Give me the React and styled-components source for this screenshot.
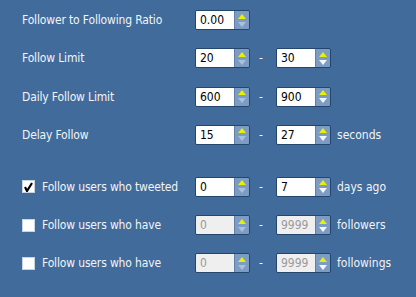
import React from "react";
import styled, { createGlobalStyle } from "styled-components";

const GlobalStyle = createGlobalStyle`
  html, body {
    margin: 0;
    padding: 0;
    background: #416b9b;
  }
  body {
    font-family: Tahoma, "DejaVu Sans Condensed", "Liberation Sans", sans-serif;
  }
`;

const Panel = styled.div`
  width: 416px;
  height: 297px;
  box-sizing: border-box;
  background: #416b9b;
  padding: 10px 0 0 22px;
  display: flex;
  flex-direction: column;
  gap: 32px;
  color: #f2f4f8;
  font-size: 12px;
`;

const Group = styled.div`
  display: flex;
  flex-direction: column;
  gap: 18.3px;
`;

const Row = styled.div`
  display: grid;
  grid-template-columns: 173px 55px 26px 55px auto;
  align-items: center;
  height: 20px;
`;

const Label = styled.div`
  display: flex;
  align-items: center;
  gap: 7px;
  white-space: nowrap;
  letter-spacing: -0.15px;
`;

const Box = styled.span`
  width: 13px;
  height: 13px;
  box-sizing: border-box;
  background: #fff;
  border: 1px solid #c8d4e2;
  display: flex;
  align-items: center;
  justify-content: center;
`;

const Dash = styled.div`
  text-align: center;
  padding-left: 2px;
  padding-right: 6px;
`;

const Suffix = styled.div`
  padding-left: 6px;
  white-space: nowrap;
`;

const Spin = styled.div`
  display: flex;
  width: 55px;
  height: 20px;
  box-sizing: border-box;
  border: 1px solid #24456c;
  border-radius: 2px;
  overflow: hidden;
`;

const Field = styled.div`
  flex: 1;
  background: ${(p) => (p.$disabled ? "#efefef" : "#fff")};
  color: ${(p) => (p.$disabled ? "#9a9a9a" : "#000")};
  padding-left: 4px;
  line-height: 18px;
`;

const Buttons = styled.div`
  width: 14px;
  background: #7c9cc4;
  border-left: 1px solid #5f80a8;
  display: flex;
  flex-direction: column;
  align-items: center;
  justify-content: center;
  gap: 3px;
`;

const Arrow = styled.span`
  width: 0;
  height: 0;
  border-left: 4px solid transparent;
  border-right: 4px solid transparent;
  ${(p) =>
    p.$up
      ? "border-bottom: 5px solid #e9f000;"
      : `border-top: 5px solid ${p.$muted ? "#a9c0dc" : "#f4f8fc"};`}
`;

function Spinner({ value, disabled, muted }) {
  return (
    <Spin>
      <Field $disabled={disabled}>{value}</Field>
      <Buttons>
        <Arrow $up />
        <Arrow $muted={muted} />
      </Buttons>
    </Spin>
  );
}

function Check({ checked }) {
  return (
    <Box>
      {checked && (
        <svg width="9" height="10" viewBox="0 0 9 10">
          <path d="M1 5 L3 9 L8 1" fill="none" stroke="#000" strokeWidth="2.2" />
        </svg>
      )}
    </Box>
  );
}

function Range({ label, check, from, to, suffix, disabled }) {
  return (
    <Row>
      <Label>
        {check !== undefined && <Check checked={check} />}
        {label}
      </Label>
      <Spinner value={from} disabled={disabled} muted />
      <Dash>-</Dash>
      <Spinner value={to} disabled={disabled} />
      <Suffix>{suffix}</Suffix>
    </Row>
  );
}

export default function App() {
  return (
    <>
      <GlobalStyle />
      <Panel>
        <Group>
          <Row>
            <Label>Follower to Following Ratio</Label>
            <Spinner value="0.00" muted />
          </Row>
          <Range label="Follow Limit" from="20" to="30" />
          <Range label="Daily Follow Limit" from="600" to="900" />
          <Range label="Delay Follow" from="15" to="27" suffix="seconds" />
        </Group>
        <Group>
          <Range label="Follow users who tweeted" check from="0" to="7" suffix="days ago" />
          <Range label="Follow users who have" check={false} from="0" to="9999" suffix="followers" disabled />
          <Range label="Follow users who have" check={false} from="0" to="9999" suffix="followings" disabled />
        </Group>
      </Panel>
    </>
  );
}
